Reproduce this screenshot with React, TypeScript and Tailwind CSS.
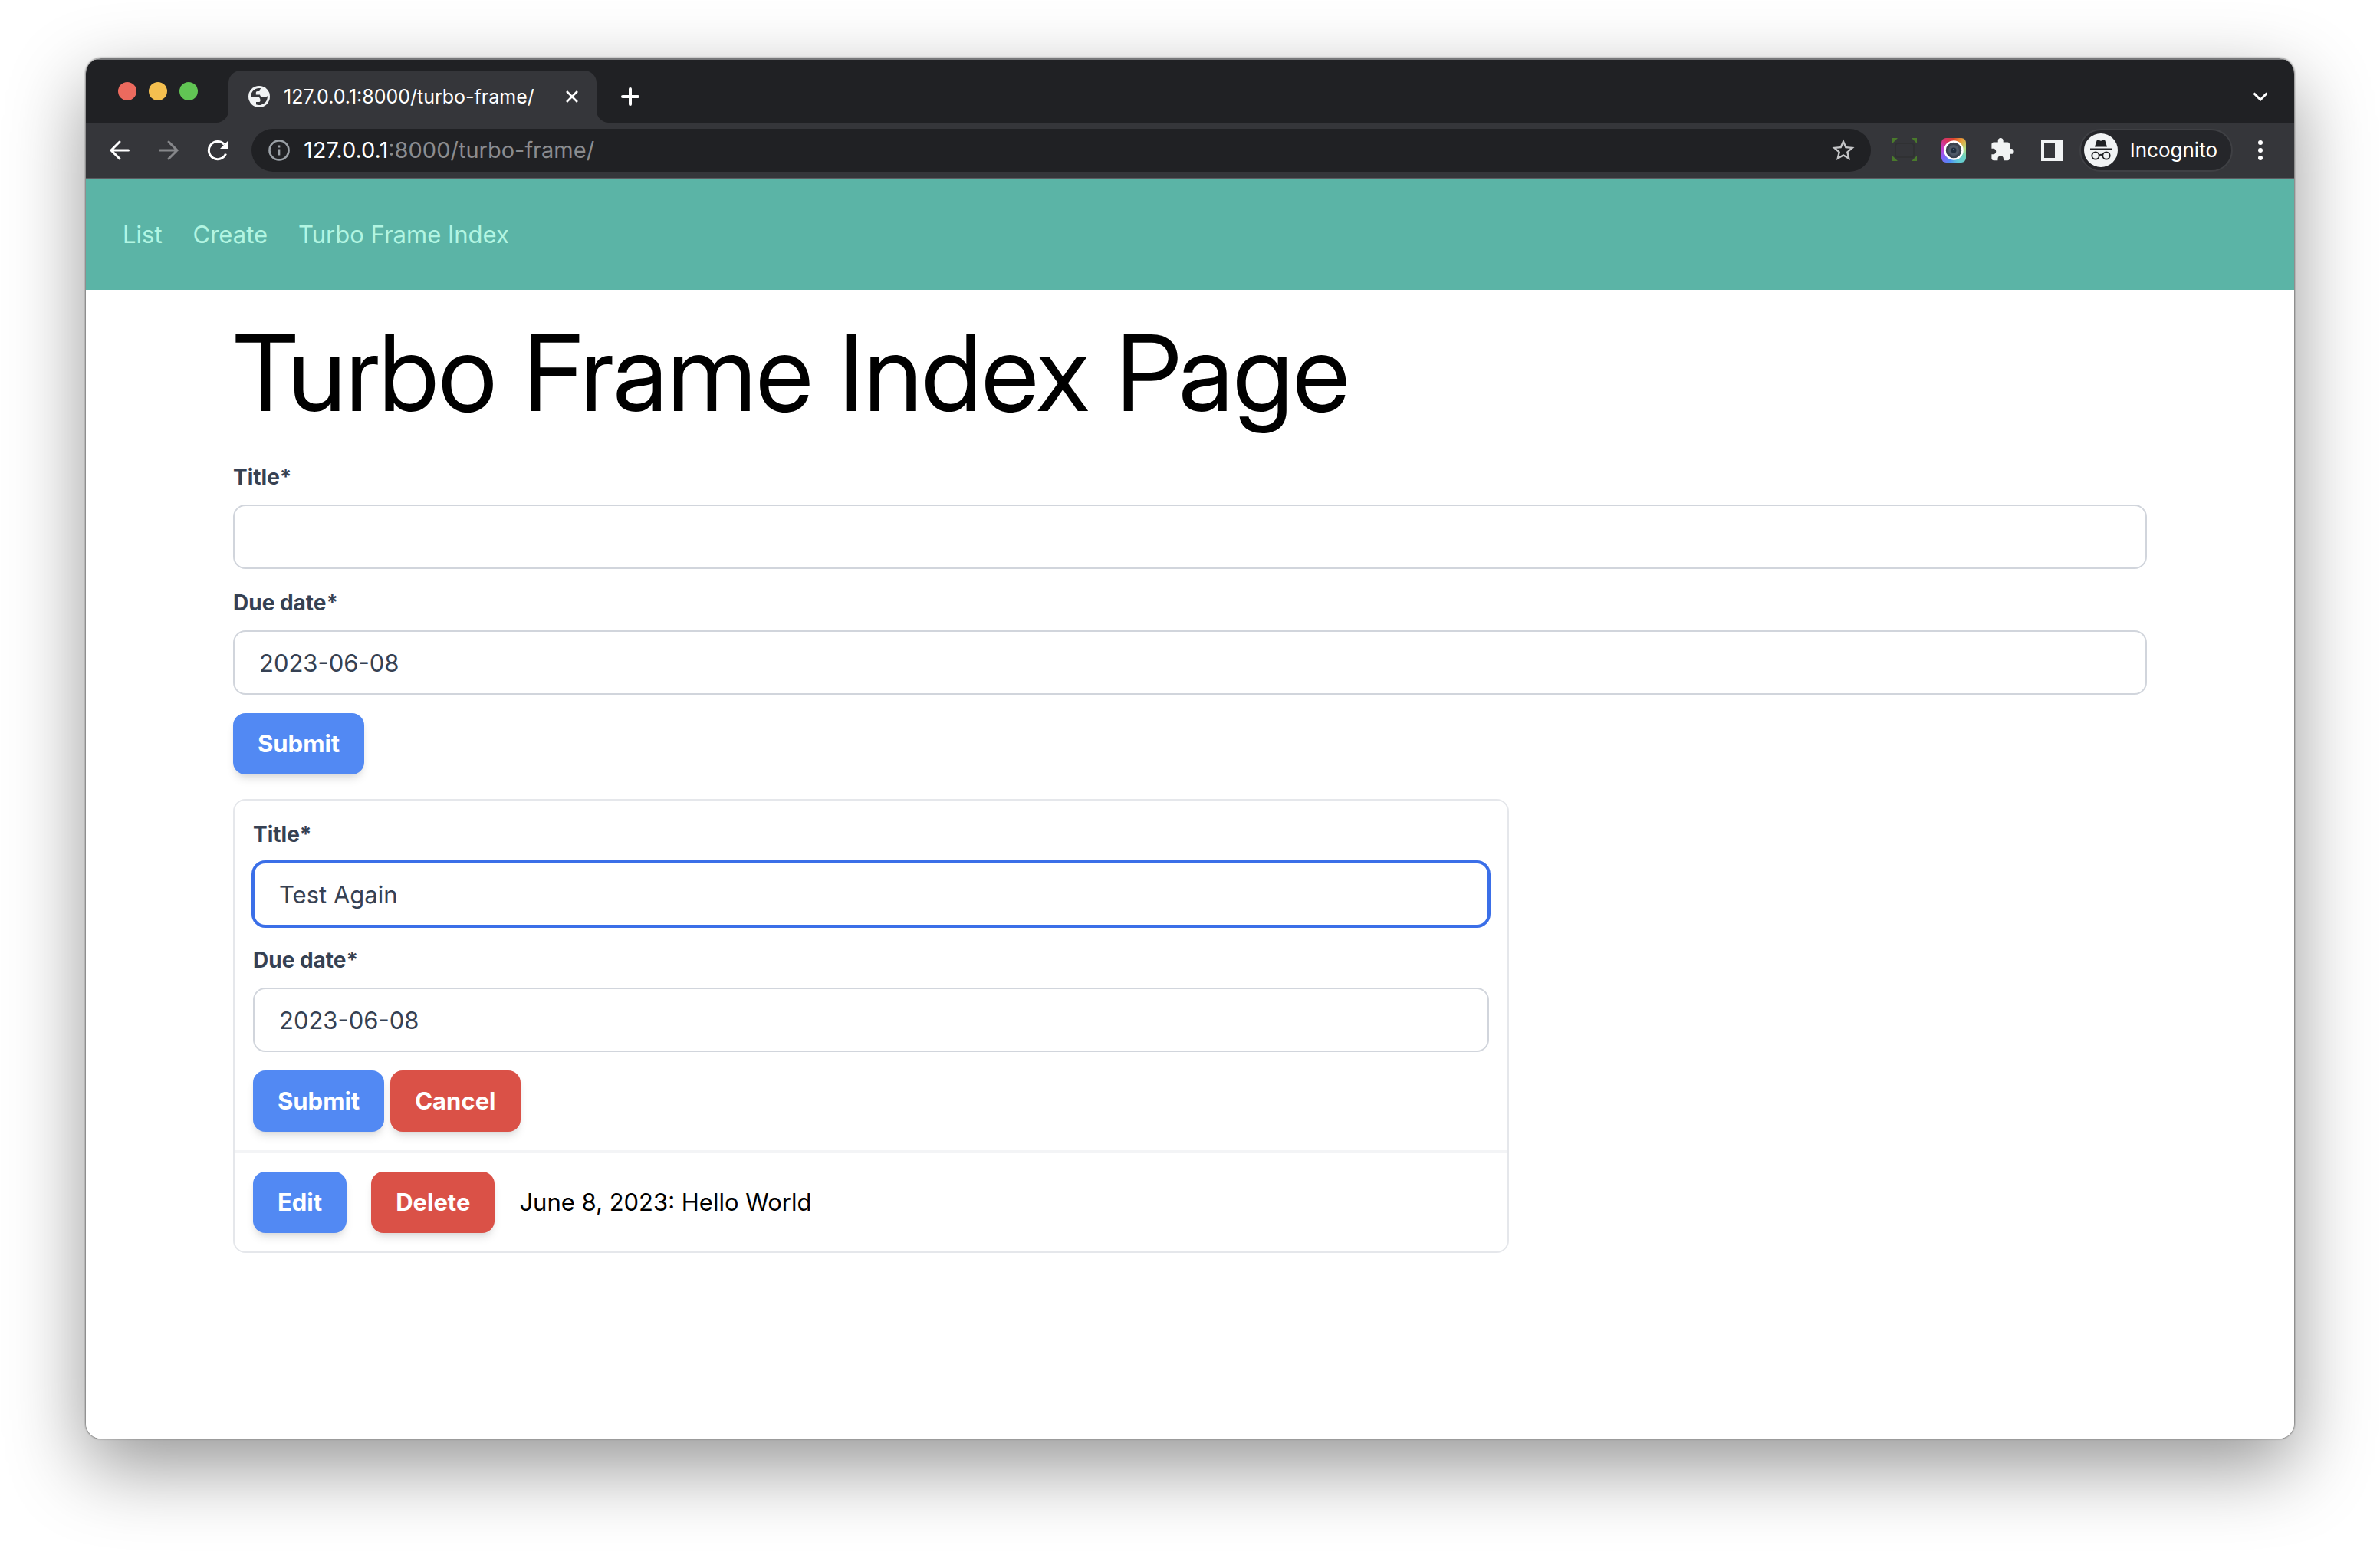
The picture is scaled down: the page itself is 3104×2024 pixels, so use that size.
import { useId } from "react";

function TrafficLights() {
  return (
    <div className="flex gap-4">
      <span className="size-6 rounded-full bg-[#ec6a5e]" />
      <span className="size-6 rounded-full bg-[#f4bf4f]" />
      <span className="size-6 rounded-full bg-[#61c554]" />
    </div>
  );
}

function TabStrip() {
  return (
    <div className="flex h-[82px] items-end bg-[#202124]">
      <div className="flex h-full items-center pr-10 pl-[42px]">
        <TrafficLights />
      </div>
      <div className="relative flex h-[68px] w-[480px] items-center rounded-t-2xl bg-[#35363a] pl-[26px] pr-5">
        <svg className="absolute bottom-0 -left-4 size-4" viewBox="0 0 16 16" aria-hidden="true">
          <path d="M16 0v16H0A16 16 0 0 0 16 0z" fill="#35363a" />
        </svg>
        <svg className="absolute bottom-0 -right-4 size-4" viewBox="0 0 16 16" aria-hidden="true">
          <path d="M0 0v16h16A16 16 0 0 1 0 0z" fill="#35363a" />
        </svg>
        <svg className="size-7 shrink-0" viewBox="0 0 28 28" aria-hidden="true">
          <circle cx="14" cy="14" r="14" fill="#f1f3f4" />
          <path
            d="M3 14A11 11 0 0 1 16.800 3.300c-1.500.8-2.300 1.700-2.300 3.700h-2.700c-1.300 0-2 .7-2 2v2.500h5.200c.5 2.300 1.700 3.300 3.900 3.300 2.300 0 4.300-.3 6-1.500A11 11 0 0 1 10 24.300v-3.200h3.300c1.700 0 2.200-.8 2.200-2.200 0-3.300-1.600-4.900-5-4.900z"
            fill="#35363a"
          />
        </svg>
        <span className="ml-[18px] text-[25px] leading-8 whitespace-nowrap text-white">127.0.0.1:8000/turbo-frame/</span>
        <button type="button" aria-label="Close tab" className="ml-auto grid size-6 place-items-center text-white">
          <svg className="size-4" viewBox="0 0 16 16" fill="none" stroke="currentColor" strokeWidth="2.600" aria-hidden="true">
            <path d="M1 1l14 14M15 1L1 15" />
          </svg>
        </button>
      </div>
      <button type="button" aria-label="New tab" className="ml-7 grid h-[68px] w-8 place-items-center text-white">
        <svg className="size-6" viewBox="0 0 24 24" fill="none" stroke="currentColor" strokeWidth="4" strokeLinecap="round" aria-hidden="true">
          <path d="M12 2v20M2 12h20" />
        </svg>
      </button>
      <button type="button" aria-label="Search tabs" className="mr-7 ml-auto grid h-[68px] w-8 place-items-center text-white">
        <svg className="h-3 w-5" viewBox="0 0 20 12" fill="none" stroke="currentColor" strokeWidth="3" aria-hidden="true">
          <path d="M1.500 1.500L10 10l8.500-8.500" />
        </svg>
      </button>
    </div>
  );
}

function CameraIcon() {
  return (
    <span className="grid size-8 place-items-center rounded-md bg-[conic-gradient(from_0deg,#d9452b,#e8a33b,#b5dc7d,#6fd3c0,#5fc8d8,#4f8df5,#8b5cf6,#c63fc9,#d8346b,#d9452b)]">
      <svg className="size-[26px]" viewBox="0 0 26 26" aria-hidden="true">
        <circle cx="13" cy="13" r="11.500" fill="#3b4450" stroke="#fff" strokeWidth="2.500" />
        <circle cx="13" cy="13" r="7" fill="#4d5967" />
        <circle cx="13" cy="13" r="3.500" fill="#22303f" />
        <circle cx="13" cy="12" r="1" fill="#5d7fa3" />
      </svg>
    </span>
  );
}

function IncognitoIcon() {
  return (
    <svg className="size-11 shrink-0" viewBox="0 0 44 44" aria-hidden="true">
      <circle cx="22" cy="22" r="22" fill="#f1f3f4" />
      <path d="M14 17.500l2.500-8c.3-.9 1.100-1.200 2-.9l3.500 1.100 3.500-1.100c.9-.3 1.700 0 2 .9l2.500 8z" fill="#202124" />
      <path d="M8 20.500h28" stroke="#202124" strokeWidth="2" />
      <g fill="none" stroke="#202124" strokeWidth="1.800">
        <circle cx="15" cy="29" r="4.700" />
        <circle cx="29" cy="29" r="4.700" />
        <path d="M19.700 28.500c1.500-1 3.100-1 4.600 0" />
      </g>
    </svg>
  );
}

function Toolbar() {
  return (
    <div className="flex h-[74px] items-center border-b-2 border-[#5b5c61] bg-[#35363a]">
      <div className="flex items-center gap-9 pl-[30px]">
        <button type="button" aria-label="Back" className="text-white">
          <svg className="size-7" viewBox="0 0 28 28" fill="none" stroke="currentColor" strokeWidth="3" strokeLinecap="round" aria-hidden="true">
            <path d="M25.500 14H3M14 3L3 14l11 11" />
          </svg>
        </button>
        <button type="button" aria-label="Forward" className="text-[#86878a]">
          <svg className="size-7" viewBox="0 0 28 28" fill="none" stroke="currentColor" strokeWidth="3" strokeLinecap="round" aria-hidden="true">
            <path d="M2.500 14H25M14 3l11 11-11 11" />
          </svg>
        </button>
        <button type="button" aria-label="Reload" className="text-white">
          <svg className="size-7" viewBox="0 0 28 28" aria-hidden="true">
            <path d="M24.500 18.500A11.500 11.500 0 1 1 22.500 6.500" fill="none" stroke="currentColor" strokeWidth="3" />
            <path d="M28 1v11H17z" fill="currentColor" />
          </svg>
        </button>
      </div>
      <div className="ml-[30px] flex h-14 flex-1 items-center rounded-full bg-[#202124] pr-5 pl-[22px]">
        <svg className="size-7 shrink-0" viewBox="0 0 28 28" fill="none" stroke="#9aa0a6" strokeWidth="2.700" aria-hidden="true">
          <circle cx="14" cy="14" r="12.500" />
          <path d="M14 12.500V20.500M14 7.500v2.900" />
        </svg>
        <p className="ml-[18px] text-[29px] leading-9 whitespace-nowrap text-[#8b8c8f]">
          <span className="text-white">127.0.0.1</span>:8000/turbo-frame/
        </p>
        <button type="button" aria-label="Bookmark this page" className="ml-auto text-[#c4c5c7]">
          <svg className="size-8" viewBox="1 1 22 22" fill="currentColor" aria-hidden="true">
            <path d="M22 9.240l-7.190-.62L12 2 9.190 8.630 2 9.240l5.460 4.730L5.820 21 12 17.270 18.180 21l-1.630-7.030L22 9.240zM12 15.400l-3.760 2.270 1-4.280-3.320-2.880 4.380-.38L12 6.100l1.710 4.040 4.380.38-3.320 2.880 1 4.280L12 15.400z" />
          </svg>
        </button>
      </div>
      <div className="flex items-center gap-8 pl-7">
        <button type="button" aria-label="Screen capture">
          <svg className="size-8" viewBox="0 0 32 32" aria-hidden="true">
            <rect x="4" y="7" width="24" height="18" rx="3" fill="none" stroke="#303133" strokeWidth="2" />
            <path d="M0 0h7L0 7zM32 0h-7l7 7zM0 30h7l-7-7zM32 30h-7l7-7z" fill="#4a7a2c" />
          </svg>
        </button>
        <button type="button" aria-label="Camera"><CameraIcon /></button>
        <button type="button" aria-label="Extensions">
          <svg className="size-8" viewBox="1 1 23 23" fill="#f1f3f4" aria-hidden="true">
            <path d="M20.500 11H19V7c0-1.100-.9-2-2-2h-4V3.500C13 2.120 11.880 1 10.500 1S8 2.120 8 3.500V5H4c-1.100 0-1.990.9-1.990 2v3.800H3.500c1.490 0 2.700 1.210 2.700 2.700s-1.210 2.700-2.700 2.700H2V20c0 1.100.9 2 2 2h3.800v-1.500c0-1.490 1.210-2.700 2.700-2.700 1.490 0 2.700 1.210 2.700 2.700V22H17c1.100 0 2-.9 2-2v-4h1.500c1.380 0 2.500-1.120 2.500-2.500S21.880 11 20.500 11z" />
          </svg>
        </button>
        <button type="button" aria-label="Side panel">
          <svg className="size-8" viewBox="0 0 32 32" aria-hidden="true">
            <path d="M2 2h28v28H2zM6 6v20h14V6z" fill="#f1f3f4" fillRule="evenodd" />
          </svg>
        </button>
      </div>
      <button type="button" className="ml-5 flex h-14 items-center rounded-full border-2 border-[#3f4044] bg-[#25262a] pr-[18px] pl-1 text-[26px] leading-8 text-white">
        <IncognitoIcon />
        <span className="ml-4">Incognito</span>
      </button>
      <button type="button" aria-label="Menu" className="mr-10 ml-8">
        <svg className="h-7 w-2" viewBox="0 0 8 28" fill="#fff" aria-hidden="true">
          <circle cx="4" cy="4" r="3" />
          <circle cx="4" cy="14" r="3" />
          <circle cx="4" cy="24" r="3" />
        </svg>
      </button>
    </div>
  );
}

function Field({ label, value, focused = false }: { label: string; value: string; focused?: boolean }) {
  const id = useId();
  return (
    <div className="mb-6">
      <label htmlFor={id} className="mb-4 block text-[28px] leading-10 font-bold text-gray-700">{label}</label>
      <input
        id={id}
        type="text"
        defaultValue={value}
        className={
          "block h-[84px] w-full rounded-2xl border-2 bg-white px-8 text-[31px] leading-10 text-gray-700 outline-none " +
          (focused ? "border-[#3b6fe8] ring-2 ring-[#3b6fe8]" : "border-gray-300")
        }
      />
    </div>
  );
}

const buttonBase =
  "h-20 rounded-2xl px-8 text-[31px] leading-10 font-bold text-white shadow-[0_8px_12px_-2px_rgba(0,0,0,0.1),0_4px_8px_-4px_rgba(0,0,0,0.1)] ";

function Button({ children, danger = false, type = "button" }: { children: string; danger?: boolean; type?: "button" | "submit" }) {
  return (
    <button type={type} className={buttonBase + (danger ? "bg-[#da5147]" : "bg-[#5289f3]")}>
      {children}
    </button>
  );
}

export default function App() {
  return (
    <div className="flex min-h-screen flex-col bg-white px-28 pt-[76px] pb-[148px] font-['Inter',sans-serif]">
      <div className="flex flex-1 flex-col rounded-[20px] shadow-[0_0_2px_1px_rgba(0,0,0,0.4),0_36px_100px_rgba(0,0,0,0.42)]">
        <div className="flex flex-1 flex-col overflow-hidden rounded-[20px] bg-white">
          <header className="border-t-2 border-[#77787a]">
            <TabStrip />
            <Toolbar />
          </header>
          <nav className="flex gap-10 bg-[#5bb4a6] p-12 text-[31px] leading-[48px] text-[#b2f5e2]">
            <a href="#list">List</a>
            <a href="#create">Create</a>
            <a href="#turbo-frame">Turbo Frame Index</a>
          </nav>
          <main className="px-48">
            <h1 className="pt-9 pb-11 font-['Inter_Display','Inter',sans-serif] text-[138px] leading-[144px] text-black">Turbo Frame Index Page</h1>
            <form>
              <Field label="Title*" value="" />
              <Field label="Due date*" value="2023-06-08" />
              <Button type="submit">Submit</Button>
            </form>
            <section className="mt-8 w-2/3 rounded-2xl border-2 border-gray-200">
              <form className="border-b-4 border-gray-100 p-6">
                <Field label="Title*" value="Test Again" focused />
                <Field label="Due date*" value="2023-06-08" />
                <div className="flex gap-2">
                  <Button type="submit">Submit</Button>
                  <Button danger>Cancel</Button>
                </div>
              </form>
              <div className="flex items-center gap-8 p-6">
                <Button>Edit</Button>
                <Button danger>Delete</Button>
                <p className="text-[31px] leading-10 text-black">June 8, 2023: Hello World</p>
              </div>
            </section>
          </main>
        </div>
      </div>
    </div>
  );
}
